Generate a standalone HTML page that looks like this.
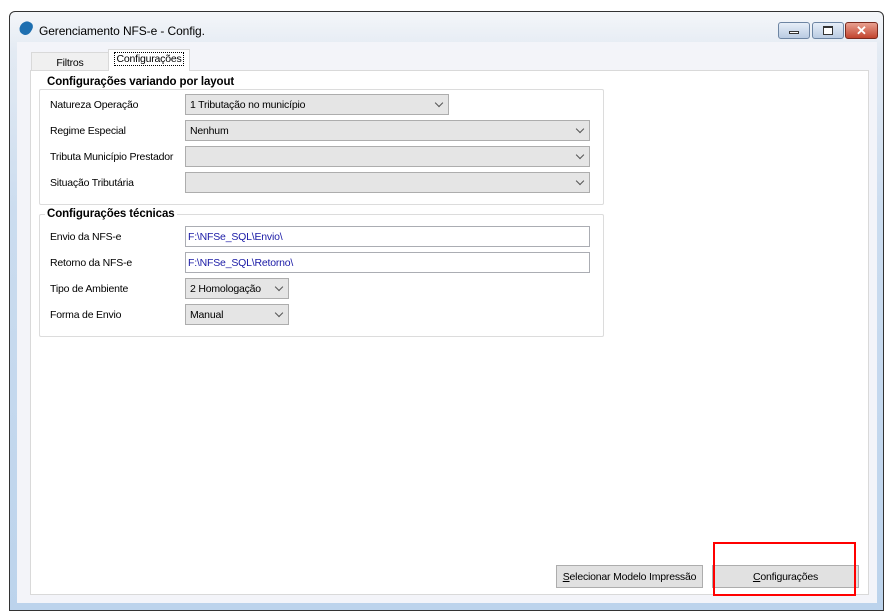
<!DOCTYPE html>
<html><head><meta charset="utf-8"><style>
*{margin:0;padding:0;box-sizing:border-box}
body{width:891px;height:613px;background:#fff;position:relative;overflow:hidden;font-family:"Liberation Sans",sans-serif;font-size:11px;color:#000}
.a{position:absolute;white-space:nowrap}
.win{left:9px;top:11px;width:875px;height:600px;border:1px solid #333;border-radius:6px 6px 0 0;background:linear-gradient(#f4f6f9 0px,#e3eaf3 40px,#cbdcef 200px,#bcd3ec 600px)}
.client{left:17px;top:42px;width:860px;height:561px;background:#f3f4f9}
.panel{left:30px;top:70px;width:839px;height:525px;background:#fff;border:1px solid #d9d9d9}
.tab{border:1px solid #d9d9d9;border-bottom:none;text-align:center;font-size:10.5px;letter-spacing:-0.2px}
.grp{border:1px solid #dcdcdc;border-radius:2px}
.gt{font-weight:bold;font-size:11.5px;background:#fff;padding:0 2px;letter-spacing:-0.1px}
.lbl{font-size:10.5px;letter-spacing:-0.2px}
.cb{background:#e5e5e5;border:1px solid #adadad;height:21px;padding:4px 4px;font-size:10.5px;letter-spacing:-0.2px}
.cb:after{content:"";position:absolute;right:6px;top:5px;width:5px;height:5px;border-right:1px solid #555;border-bottom:1px solid #555;transform:rotate(45deg)}
.tx{background:#fff;border:1px solid #abadb3;height:21px;padding:4px 2px;color:#1a1aa6;font-size:10.5px;letter-spacing:-0.2px}
.btn{background:#e1e1e1;border:1px solid #adadad;height:23px;text-align:center;padding-top:5px;font-size:10.5px;letter-spacing:-0.2px}
</style></head><body>
<div class="a win"></div>
<div class="a" style="left:20px;top:21px;width:12px;height:14px;background:#1e6fb0;border-radius:60% 40% 50% 50%;transform:rotate(30deg)"></div>
<div class="a" style="left:39px;top:24px;font-size:12px;letter-spacing:-0.1px">Gerenciamento NFS-e - Config.</div>
<div class="a" style="left:778px;top:22px;width:32px;height:17px;border:1px solid #6d85a3;border-radius:3px;background:linear-gradient(#e6eef8,#b9cbe2)"><div class="a" style="left:10px;top:8px;width:10px;height:3px;background:#fff;border:1px solid #333"></div></div>
<div class="a" style="left:812px;top:22px;width:32px;height:17px;border:1px solid #6d85a3;border-radius:3px;background:linear-gradient(#e6eef8,#b9cbe2)"><div class="a" style="left:10px;top:3px;width:10px;height:9px;background:#fff;border:1px solid #333;border-top-width:2px"></div></div>
<div class="a" style="left:845px;top:22px;width:33px;height:17px;border:1px solid #7a2a1e;border-radius:3px;background:linear-gradient(#e8a090,#c2442e);color:#fff;font-weight:bold;font-size:13px;text-align:center;line-height:15px">✕</div>
<div class="a client"></div>
<div class="a tab" style="left:31px;top:52px;width:78px;height:18px;background:#f0f0f0;padding-top:4px">Filtros</div>
<div class="a panel"></div>
<div class="a tab" style="left:108px;top:49px;width:82px;height:22px;background:#fff;padding-top:3px"><span style="border:1px dotted #000;padding:0 1px">Configurações</span></div>
<div class="a grp" style="left:39px;top:89px;width:565px;height:116px"></div>
<div class="a gt" style="left:45px;top:76px">Configurações variando por layout</div>
<div class="a lbl" style="left:50px;top:99px">Natureza Operação</div>
<div class="a lbl" style="left:50px;top:125px">Regime Especial</div>
<div class="a lbl" style="left:50px;top:151px">Tributa Município Prestador</div>
<div class="a lbl" style="left:50px;top:177px">Situação Tributária</div>
<div class="a cb" style="left:185px;top:94px;width:264px">1 Tributação no município</div>
<div class="a cb" style="left:185px;top:120px;width:405px">Nenhum</div>
<div class="a cb" style="left:185px;top:146px;width:405px"></div>
<div class="a cb" style="left:185px;top:172px;width:405px"></div>
<div class="a grp" style="left:39px;top:214px;width:565px;height:123px"></div>
<div class="a gt" style="left:45px;top:208px">Configurações técnicas</div>
<div class="a lbl" style="left:50px;top:231px">Envio da NFS-e</div>
<div class="a lbl" style="left:50px;top:257px">Retorno da NFS-e</div>
<div class="a lbl" style="left:50px;top:283px">Tipo de Ambiente</div>
<div class="a lbl" style="left:50px;top:309px">Forma de Envio</div>
<div class="a tx" style="left:185px;top:226px;width:405px">F:\NFSe_SQL\Envio\</div>
<div class="a tx" style="left:185px;top:252px;width:405px">F:\NFSe_SQL\Retorno\</div>
<div class="a cb" style="left:185px;top:278px;width:104px">2 Homologação</div>
<div class="a cb" style="left:185px;top:304px;width:104px">Manual</div>
<div class="a btn" style="left:556px;top:565px;width:147px"><u>S</u>elecionar Modelo Impressão</div>
<div class="a btn" style="left:712px;top:565px;width:147px"><u>C</u>onfigurações</div>
<div class="a" style="left:713px;top:542px;width:143px;height:54px;border:2px solid #f00"></div>
</body></html>
